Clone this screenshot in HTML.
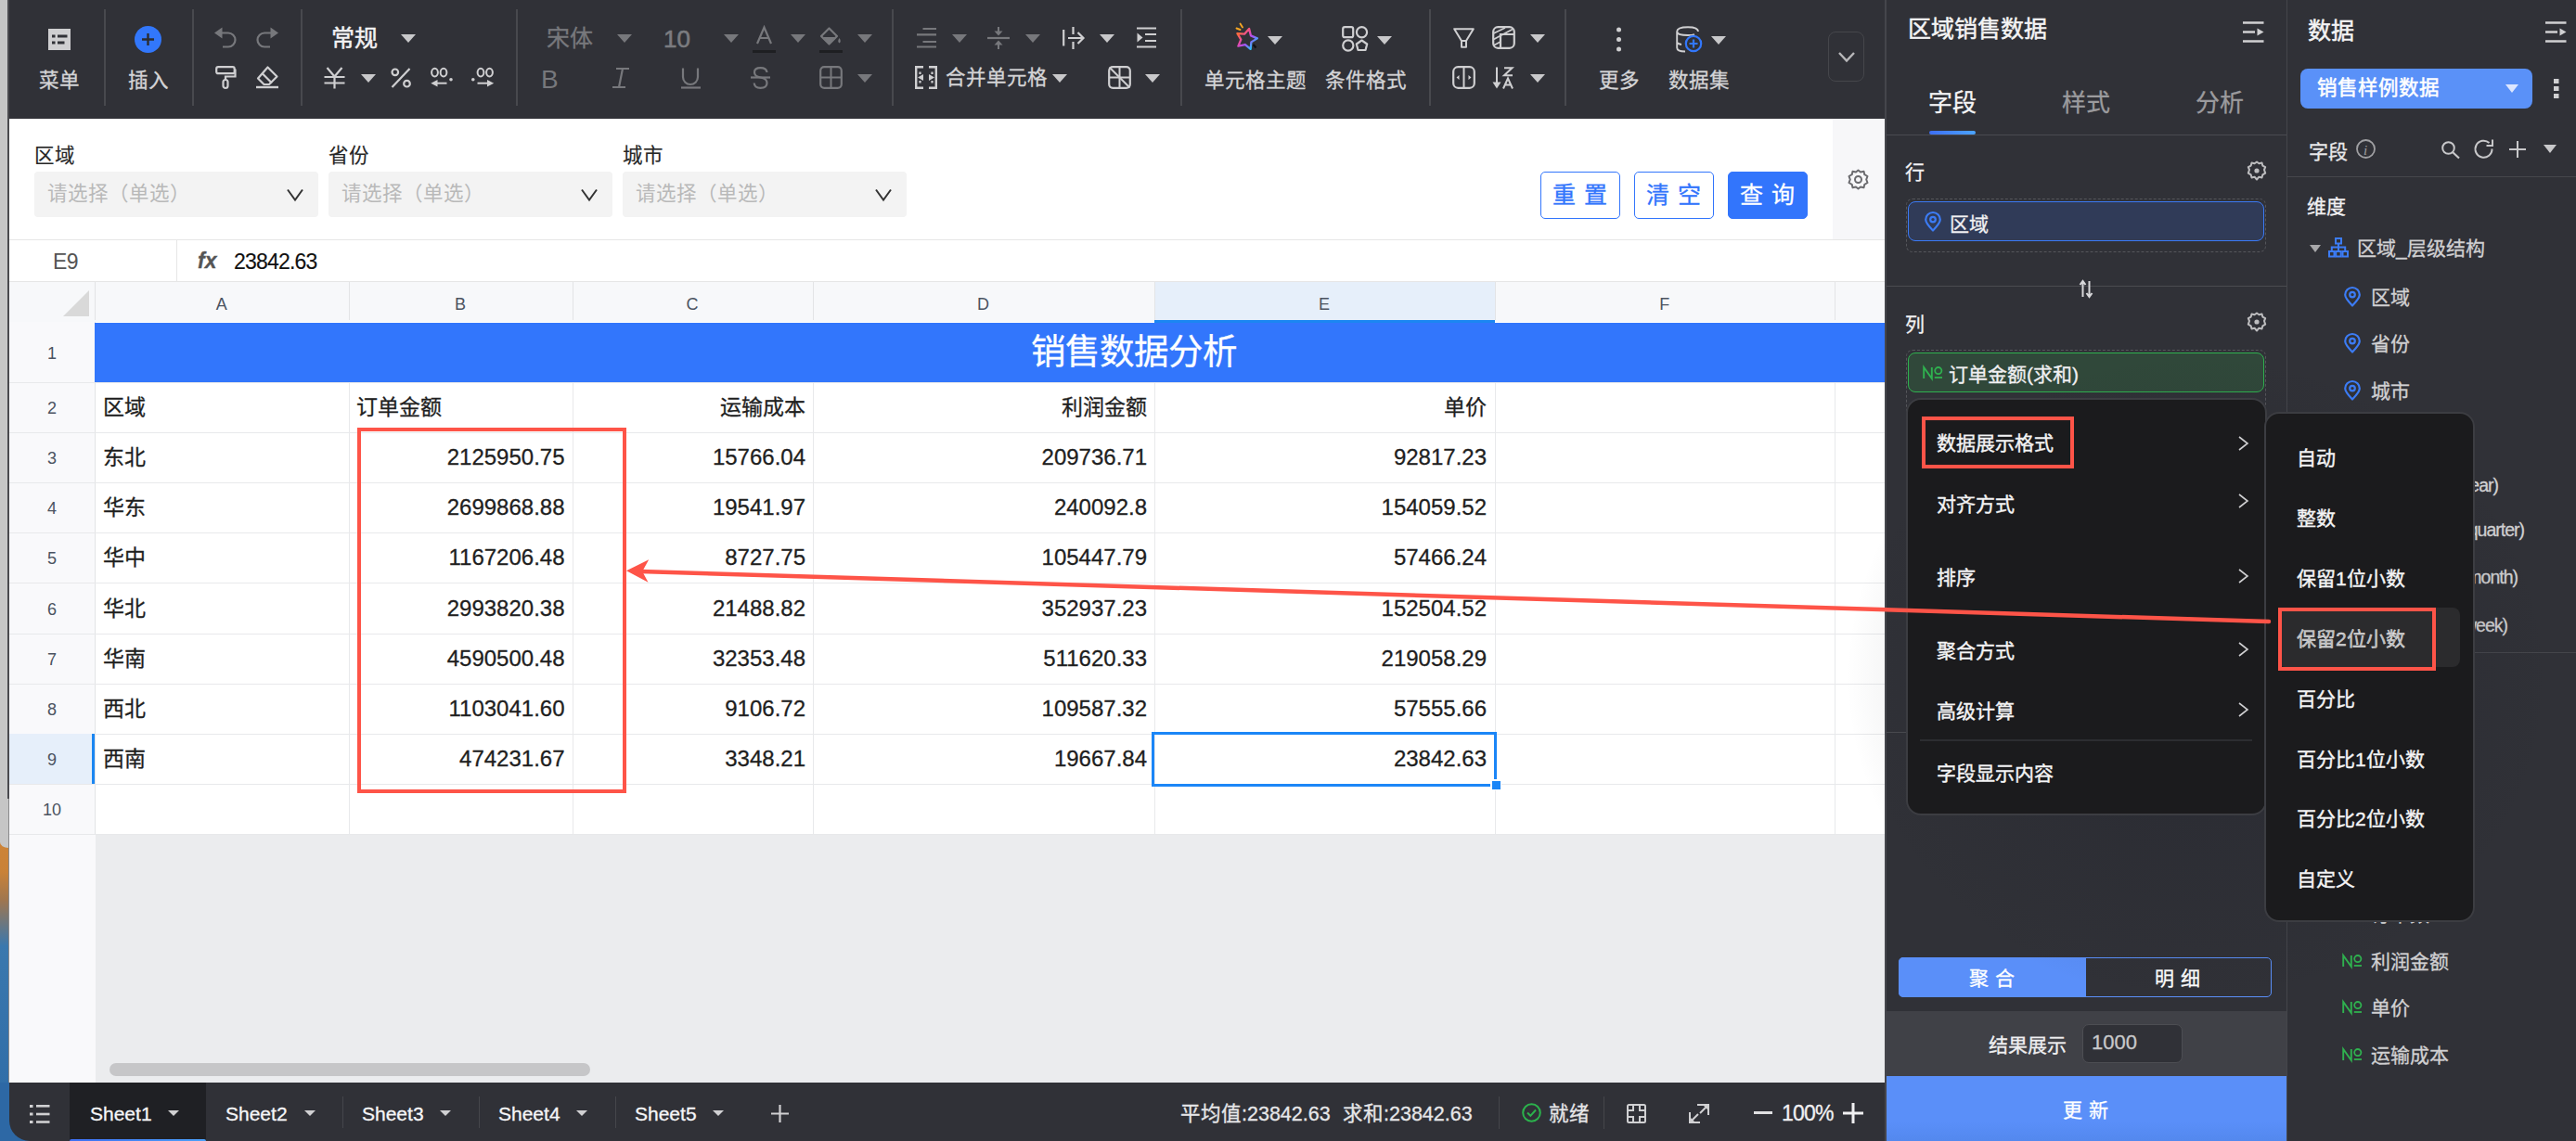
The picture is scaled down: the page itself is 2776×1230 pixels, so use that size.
<!DOCTYPE html>
<html lang="zh-CN">
<head>
<meta charset="utf-8">
<style>
*{box-sizing:border-box;margin:0;padding:0}
html,body{width:2776px;height:1230px;overflow:hidden;background:#c9c9c9}
body{font-family:"Liberation Sans",sans-serif;position:relative}
.a{position:absolute}
.t{position:absolute;white-space:nowrap;line-height:1;-webkit-text-stroke:0.3px currentColor}
svg{position:absolute;overflow:visible}
/* toolbar */
#tb{left:10px;top:0;width:2021px;height:128px;background:#303137}
.sep{position:absolute;top:10px;width:2px;height:104px;background:#48494e}
.lbl{font-size:21.5px;color:#d4d4d6}
.dis{color:#7b7c80}
.tri{position:absolute;width:0;height:0;border-left:8px solid transparent;border-right:8px solid transparent;border-top:9px solid #c8c8ca}
.tri.d{border-top-color:#77787c}
.ch{font-size:18px;color:#4b5361;-webkit-text-stroke:0}
.rn{font-size:18px;color:#4b5361;margin-top:2px;-webkit-text-stroke:0}
.cell{font-size:24px;color:#1f1f1f}
.cn{font-size:23px;margin-top:1px}
.flab{font-size:21.5px;color:#262626;margin-top:3px;-webkit-text-stroke:0.15px #262626}
.sel{width:306px;height:49px;background:#f3f3f3;border-radius:4px}
.ph{font-size:21.5px;color:#b9b9b9;margin-top:3px;-webkit-text-stroke:0}
.btno{width:86px;height:51px;border:1px solid #3275fc;border-radius:5px;color:#3275fc;font-size:25px;line-height:49px;text-align:center;background:#fff;letter-spacing:1px;-webkit-text-stroke:0.3px currentColor}
.stab{font-size:21px;color:#f6f6f8}
.tri2{width:0;height:0;border-left:6px solid transparent;border-right:6px solid transparent;border-top:6px solid #d0d0d2}
.sbar{font-size:21.5px;color:#e6e6e8}
.rp{font-size:21px;color:#d0d0d2;margin-top:1px}
.num{font-size:18px;color:#2fb14f;letter-spacing:-0.5px}
.mi{font-size:21px;color:#f4f4f5;margin-top:2px;-webkit-text-stroke:0.4px #f4f4f5}
</style>
</head>
<body>
<!-- wallpaper strip bottom-left -->
<div class="a" style="left:0;top:880px;width:12px;height:350px;background:linear-gradient(#d08536 0px,#c98238 60px,#a0764f 90px,#3a78ae 140px,#2d6aa6 350px)"></div>
<div class="a" style="left:0;top:0;width:10px;height:914px;background:#c6c6c6;border-bottom-left-radius:9px 6px"></div>
<div class="a" style="left:8px;top:0;width:2px;height:861px;background:#4a4a4e"></div>
<div class="a" style="left:9px;top:861px;width:1px;height:369px;background:#8a8a8c"></div>
<!-- FILTER AREA -->
<div class="a" style="left:10px;top:128px;width:2021px;height:131px;background:#fff"></div>
<div class="a" style="left:1975px;top:128px;width:56px;height:131px;background:#f7f7f9"></div>
<!-- formula bar -->
<div class="a" style="left:10px;top:258px;width:2021px;height:46px;background:#fff;border-top:1px solid #e6e6e6;border-bottom:1px solid #e6e6e6"></div>
<div class="a" style="left:190px;top:259px;width:1px;height:45px;background:#e6e6e6"></div>
<!-- col header -->
<div class="a" style="left:10px;top:304px;width:2021px;height:44px;background:#f7f8fa;border-bottom:1px solid #e3e4e6"></div>
<!-- grid -->
<div class="a" style="left:102px;top:347px;width:1929px;height:552px;background:#fff"></div>
<!-- row header col -->
<div class="a" style="left:10px;top:347px;width:93px;height:820px;background:#f9f9fb"></div>
<div class="a" style="left:102px;top:347px;width:1px;height:552px;background:#e3e4e6"></div>
<!-- empty gray -->
<div class="a" style="left:103px;top:899px;width:1928px;height:268px;background:#ebecee"></div>
<!-- bottom bar -->
<div class="a" style="left:0;top:1167px;width:40px;height:63px;background:#2d68a5"></div>
<div class="a" style="left:10px;top:1167px;width:2021px;height:63px;background:#303137;border-bottom-left-radius:22px"></div>
<!-- MIDDLE PANEL -->
<div class="a" style="left:2031px;top:0;width:433px;height:1230px;background:#303137"></div>
<!-- RIGHT PANEL -->
<div class="a" style="left:2464px;top:0;width:312px;height:1230px;background:#303137;border-left:1px solid #45464b"></div>


<!-- FILTER CONTENT -->
<div class="t flab" style="left:37px;top:155px">区域</div>
<div class="t flab" style="left:354px;top:155px">省份</div>
<div class="t flab" style="left:671px;top:155px">城市</div>
<div class="a sel" style="left:37px;top:185px"></div>
<div class="a sel" style="left:354px;top:185px"></div>
<div class="a sel" style="left:671px;top:185px"></div>
<div class="t ph" style="left:51px;top:196px">请选择（单选）</div>
<div class="t ph" style="left:368px;top:196px">请选择（单选）</div>
<div class="t ph" style="left:685px;top:196px">请选择（单选）</div>
<svg style="left:309px;top:203px" width="18" height="14"><path d="M1 1.5 L9 12.5 L17 1.5" fill="none" stroke="#333" stroke-width="2"/></svg>
<svg style="left:626px;top:203px" width="18" height="14"><path d="M1 1.5 L9 12.5 L17 1.5" fill="none" stroke="#333" stroke-width="2"/></svg>
<svg style="left:943px;top:203px" width="18" height="14"><path d="M1 1.5 L9 12.5 L17 1.5" fill="none" stroke="#333" stroke-width="2"/></svg>
<div class="a btno" style="left:1660px;top:185px">重 置</div>
<div class="a btno" style="left:1761px;top:185px">清 空</div>
<div class="a btno" style="left:1862px;top:185px;background:#3275fc;color:#fff;border-color:#3275fc">查 询</div>
<svg style="left:1991px;top:182px" width="23" height="23"><g fill="none" stroke="#6b6b6f" stroke-width="2"><path d="M11.5 1.5 L14 3.5 L17.5 2.8 L18.3 6.2 L21.5 8 L20.2 11.5 L21.5 15 L18.3 16.8 L17.5 20.2 L14 19.5 L11.5 21.5 L9 19.5 L5.5 20.2 L4.7 16.8 L1.5 15 L2.8 11.5 L1.5 8 L4.7 6.2 L5.5 2.8 L9 3.5 Z" stroke-linejoin="round"/><circle cx="11.5" cy="11.5" r="3.5"/></g></svg>
<!-- formula bar -->
<div class="t" style="left:57px;top:271px;font-size:23px;color:#555;letter-spacing:-0.5px;-webkit-text-stroke:0">E9</div>
<div class="t" style="left:213px;top:270px;font-size:23px;font-style:italic;font-weight:bold;color:#555">fx</div>
<div class="t" style="left:252px;top:271px;font-size:23px;color:#111;letter-spacing:-0.8px;-webkit-text-stroke:0.15px #111">23842.63</div>

<!-- GRID -->
<div class="a" style="left:1244px;top:304px;width:367px;height:44px;background:#e6effa"></div>
<div class="a" style="left:1244px;top:345px;width:367px;height:3px;background:#1b86f2"></div>
<div class="a" style="left:102px;top:304px;width:1px;height:41px;background:#e3e4e6"></div>
<div class="a" style="left:375.5px;top:304px;width:1px;height:41px;background:#e3e4e6"></div>
<div class="a" style="left:616.5px;top:304px;width:1px;height:41px;background:#e3e4e6"></div>
<div class="a" style="left:875.5px;top:304px;width:1px;height:41px;background:#e3e4e6"></div>
<div class="a" style="left:1243.5px;top:304px;width:1px;height:41px;background:#e3e4e6"></div>
<div class="a" style="left:1610.5px;top:304px;width:1px;height:41px;background:#e3e4e6"></div>
<div class="a" style="left:1977px;top:304px;width:1px;height:41px;background:#e3e4e6"></div>
<div class="t ch" style="left:218.75px;top:319px;width:40px;text-align:center">A</div>
<div class="t ch" style="left:476.0px;top:319px;width:40px;text-align:center">B</div>
<div class="t ch" style="left:726.0px;top:319px;width:40px;text-align:center">C</div>
<div class="t ch" style="left:1039.5px;top:319px;width:40px;text-align:center">D</div>
<div class="t ch" style="left:1407.0px;top:319px;width:40px;text-align:center">E</div>
<div class="t ch" style="left:1773.75px;top:319px;width:40px;text-align:center">F</div>
<svg style="left:68px;top:313px" width="28" height="28"><path d="M28 0 L28 28 L0 28 Z" fill="#d9d9d9"/></svg>
<div class="a" style="left:10px;top:412px;width:2021px;height:1px;background:#e8e9eb"></div>
<div class="a" style="left:10px;top:466px;width:2021px;height:1px;background:#e8e9eb"></div>
<div class="a" style="left:10px;top:520px;width:2021px;height:1px;background:#e8e9eb"></div>
<div class="a" style="left:10px;top:574px;width:2021px;height:1px;background:#e8e9eb"></div>
<div class="a" style="left:10px;top:628px;width:2021px;height:1px;background:#e8e9eb"></div>
<div class="a" style="left:10px;top:683px;width:2021px;height:1px;background:#e8e9eb"></div>
<div class="a" style="left:10px;top:737px;width:2021px;height:1px;background:#e8e9eb"></div>
<div class="a" style="left:10px;top:791px;width:2021px;height:1px;background:#e8e9eb"></div>
<div class="a" style="left:10px;top:845px;width:2021px;height:1px;background:#e8e9eb"></div>
<div class="a" style="left:10px;top:899px;width:2021px;height:1px;background:#e8e9eb"></div>
<div class="a" style="left:375.5px;top:412px;width:1px;height:487px;background:#e8e9eb"></div>
<div class="a" style="left:616.5px;top:412px;width:1px;height:487px;background:#e8e9eb"></div>
<div class="a" style="left:875.5px;top:412px;width:1px;height:487px;background:#e8e9eb"></div>
<div class="a" style="left:1243.5px;top:412px;width:1px;height:487px;background:#e8e9eb"></div>
<div class="a" style="left:1610.5px;top:412px;width:1px;height:487px;background:#e8e9eb"></div>
<div class="a" style="left:1977px;top:412px;width:1px;height:487px;background:#e8e9eb"></div>
<div class="a" style="left:102px;top:348px;width:1929px;height:64px;background:#3276fc"></div>
<div class="t" style="left:1111px;top:361px;font-size:37.5px;font-weight:500;color:#fff">销售数据分析</div>
<div class="a" style="left:10px;top:791px;width:92px;height:54px;background:#e6effa"></div>
<div class="a" style="left:99px;top:791px;width:3px;height:54px;background:#1b86f2"></div>
<div class="t rn" style="left:16px;top:370.0px;width:80px;text-align:center">1</div>
<div class="t rn" style="left:16px;top:429.0px;width:80px;text-align:center">2</div>
<div class="t rn" style="left:16px;top:483.0px;width:80px;text-align:center">3</div>
<div class="t rn" style="left:16px;top:537.0px;width:80px;text-align:center">4</div>
<div class="t rn" style="left:16px;top:591.0px;width:80px;text-align:center">5</div>
<div class="t rn" style="left:16px;top:645.5px;width:80px;text-align:center">6</div>
<div class="t rn" style="left:16px;top:700.0px;width:80px;text-align:center">7</div>
<div class="t rn" style="left:16px;top:754.0px;width:80px;text-align:center">8</div>
<div class="t rn" style="left:16px;top:808.0px;width:80px;text-align:center">9</div>
<div class="t rn" style="left:16px;top:862.0px;width:80px;text-align:center">10</div>
<div class="t cell cn" style="left:111px;top:427.0px">区域</div>
<div class="t cell cn" style="left:384px;top:427.0px">订单金额</div>
<div class="t cell cn" style="right:1908.0px;top:427.0px">运输成本</div>
<div class="t cell cn" style="right:1540.0px;top:427.0px">利润金额</div>
<div class="t cell cn" style="right:1174.0px;top:427.0px">单价</div>
<div class="t cell cn" style="left:111px;top:481.0px">东北</div>
<div class="t cell" style="right:2167.5px;top:481.0px">2125950.75</div>
<div class="t cell" style="right:1908.0px;top:481.0px">15766.04</div>
<div class="t cell" style="right:1540.0px;top:481.0px">209736.71</div>
<div class="t cell" style="right:1174.0px;top:481.0px">92817.23</div>
<div class="t cell cn" style="left:111px;top:535.0px">华东</div>
<div class="t cell" style="right:2167.5px;top:535.0px">2699868.88</div>
<div class="t cell" style="right:1908.0px;top:535.0px">19541.97</div>
<div class="t cell" style="right:1540.0px;top:535.0px">240092.8</div>
<div class="t cell" style="right:1174.0px;top:535.0px">154059.52</div>
<div class="t cell cn" style="left:111px;top:589.0px">华中</div>
<div class="t cell" style="right:2167.5px;top:589.0px">1167206.48</div>
<div class="t cell" style="right:1908.0px;top:589.0px">8727.75</div>
<div class="t cell" style="right:1540.0px;top:589.0px">105447.79</div>
<div class="t cell" style="right:1174.0px;top:589.0px">57466.24</div>
<div class="t cell cn" style="left:111px;top:643.5px">华北</div>
<div class="t cell" style="right:2167.5px;top:643.5px">2993820.38</div>
<div class="t cell" style="right:1908.0px;top:643.5px">21488.82</div>
<div class="t cell" style="right:1540.0px;top:643.5px">352937.23</div>
<div class="t cell" style="right:1174.0px;top:643.5px">152504.52</div>
<div class="t cell cn" style="left:111px;top:698.0px">华南</div>
<div class="t cell" style="right:2167.5px;top:698.0px">4590500.48</div>
<div class="t cell" style="right:1908.0px;top:698.0px">32353.48</div>
<div class="t cell" style="right:1540.0px;top:698.0px">511620.33</div>
<div class="t cell" style="right:1174.0px;top:698.0px">219058.29</div>
<div class="t cell cn" style="left:111px;top:752.0px">西北</div>
<div class="t cell" style="right:2167.5px;top:752.0px">1103041.60</div>
<div class="t cell" style="right:1908.0px;top:752.0px">9106.72</div>
<div class="t cell" style="right:1540.0px;top:752.0px">109587.32</div>
<div class="t cell" style="right:1174.0px;top:752.0px">57555.66</div>
<div class="t cell cn" style="left:111px;top:806.0px">西南</div>
<div class="t cell" style="right:2167.5px;top:806.0px">474231.67</div>
<div class="t cell" style="right:1908.0px;top:806.0px">3348.21</div>
<div class="t cell" style="right:1540.0px;top:806.0px">19667.84</div>
<div class="t cell" style="right:1174.0px;top:806.0px">23842.63</div>
<!-- BOTTOM BAR CONTENT -->
<div class="a" style="left:118px;top:1146px;width:518px;height:14px;background:#c6c6c8;border-radius:7px"></div>
<div class="a" style="left:75px;top:1167px;width:147px;height:63px;background:#1f2024"></div>
<div class="a" style="left:75px;top:1227.5px;width:147px;height:2.5px;background:linear-gradient(90deg,#3d6ef2,#4aa0f8);border-radius:2px 2px 0 0"></div>
<svg style="left:32px;top:1190px" width="22" height="22"><g fill="#d0d0d2"><rect x="0" y="1" width="3.5" height="3"/><rect x="0" y="9.5" width="3.5" height="3"/><rect x="0" y="18" width="3.5" height="3"/><rect x="7" y="1" width="14.5" height="2.6"/><rect x="7" y="9.7" width="14.5" height="2.6"/><rect x="7" y="18.2" width="14.5" height="2.6"/></g></svg>
<div class="t stab" style="left:97px;top:1190px">Sheet1</div>
<div class="a tri2" style="left:181px;top:1197px"></div>
<div class="t stab" style="left:243px;top:1190px">Sheet2</div>
<div class="a tri2" style="left:328px;top:1197px"></div>
<div class="a" style="left:369px;top:1182px;width:1px;height:34px;background:#45464b"></div>
<div class="t stab" style="left:390px;top:1190px">Sheet3</div>
<div class="a tri2" style="left:474px;top:1197px"></div>
<div class="a" style="left:516px;top:1182px;width:1px;height:34px;background:#45464b"></div>
<div class="t stab" style="left:537px;top:1190px">Sheet4</div>
<div class="a tri2" style="left:621px;top:1197px"></div>
<div class="a" style="left:663px;top:1182px;width:1px;height:34px;background:#45464b"></div>
<div class="t stab" style="left:684px;top:1190px">Sheet5</div>
<div class="a tri2" style="left:768px;top:1197px"></div>
<svg style="left:831px;top:1191px" width="19" height="19"><path d="M9.5 0 V19 M0 9.5 H19" stroke="#d0d0d2" stroke-width="2.2"/></svg>
<div class="t sbar" style="left:1272px;top:1191px">平均值:23842.63</div>
<div class="t sbar" style="left:1447px;top:1191px">求和:23842.63</div>
<div class="a" style="left:1615px;top:1182px;width:1px;height:35px;background:#45464b"></div>
<svg style="left:1640px;top:1189px" width="21" height="21"><circle cx="10.5" cy="10.5" r="9.3" fill="none" stroke="#2bb24c" stroke-width="2"/><path d="M6 10.5 L9.3 13.8 L15 7.5" fill="none" stroke="#2bb24c" stroke-width="2"/></svg>
<div class="t sbar" style="left:1669px;top:1191px">就绪</div>
<div class="a" style="left:1728px;top:1182px;width:1px;height:35px;background:#45464b"></div>
<svg style="left:1753px;top:1190px" width="21" height="21"><g fill="none" stroke="#d0d0d2" stroke-width="2"><rect x="1" y="1" width="19" height="19" rx="1.5"/><path d="M7 1 V7 H1 M14 1 V7 H20 M7 20 V14 H1 M14 20 V14 H20"/></g></svg>
<svg style="left:1820px;top:1190px" width="22" height="21"><g fill="none" stroke="#d0d0d2" stroke-width="2"><path d="M9 1 H21 V12 M1 9 V20 H12 M21 1 L12 10 M1 20 L10 11"/></g><path d="M15 1 H21 V7 Z M1 14 V20 H7 Z" fill="#d0d0d2"/></svg>
<div class="a" style="left:1890px;top:1198px;width:20px;height:3px;background:#e0e0e2"></div>
<div class="t sbar" style="left:1920px;top:1189px;color:#f0f0f2;font-size:23px;letter-spacing:-0.8px">100%</div>
<svg style="left:1986px;top:1189px" width="22" height="22"><path d="M11 0 V22 M0 11 H22" stroke="#f0f0f2" stroke-width="3"/></svg>


<!-- MIDDLE PANEL CONTENT -->
<div class="t" style="left:2056px;top:19px;font-size:25px;-webkit-text-stroke:0.5px #f4f4f5;color:#f4f4f5">区域销售数据</div>
<svg style="left:2417px;top:23px" width="23" height="23"><path d="M0 1.5 H22.5 M0 11.5 H13 M0 21.5 H22.5" stroke="#d0d0d2" stroke-width="2.4"/><path d="M15.5 7.5 L22.5 11.5 L15.5 15.5 Z" fill="#d0d0d2"/></svg>
<div class="t" style="left:2078px;top:98px;font-size:26px;color:#f4f4f5">字段</div>
<div class="t" style="left:2222px;top:98px;font-size:26px;color:#9b9b9e">样式</div>
<div class="t" style="left:2366px;top:98px;font-size:26px;color:#9b9b9e">分析</div>
<div class="a" style="left:2079px;top:141px;width:50px;height:4px;border-radius:2px;background:linear-gradient(90deg,#3d6ef2,#4ba4ff)"></div>
<div class="a" style="left:2031px;top:145px;width:433px;height:1px;background:#4a4b50"></div>
<div class="t" style="left:2053px;top:175px;font-size:21px;color:#f0f0f2">行</div>
<svg class="gear" style="left:2421px;top:173px" width="22" height="22"><g fill="none" stroke="#bdbdbf" stroke-width="2"><path d="M11 1.5 L13.4 3.3 L16.5 2.6 L17.3 5.6 L20.2 7.2 L19 10 L20.2 13.6 L17.3 15.4 L16.5 18.4 L13.4 17.7 L11 20.5 L8.6 17.7 L5.5 18.4 L4.7 15.4 L1.8 13.6 L3 10 L1.8 7.2 L4.7 5.6 L5.5 2.6 L8.6 3.3 Z" stroke-linejoin="round"/><circle cx="11" cy="11" r="1.6" fill="#bdbdbf"/></g></svg>
<div class="a" style="left:2054px;top:214px;width:388px;height:58px;border:1px dashed #55565b;border-radius:7px"></div>
<div class="a" style="left:2056px;top:217px;width:384px;height:43px;border:1.5px solid #3b7af5;border-radius:8px;background:#303b58"></div>
<svg style="left:2074px;top:228px" width="18" height="22"><path d="M9 20.5 Q1.2 12.5 1.2 8.8 A7.8 7.8 0 0 1 16.8 8.8 Q16.8 12.5 9 20.5 Z" fill="none" stroke="#3c7cf5" stroke-width="2.2" stroke-linejoin="round"/><circle cx="9" cy="8.6" r="2.8" fill="none" stroke="#3c7cf5" stroke-width="2.2"/></svg>
<div class="t" style="left:2101px;top:231px;font-size:21px;color:#f0f0f2">区域</div>
<div class="a" style="left:2031px;top:308px;width:433px;height:1px;background:#4a4b50"></div>
<svg style="left:2241px;top:302px" width="14" height="19"><path d="M3.5 18 V1.5 M0.5 5 L3.5 1 L6.5 5 M10.5 1 V17.5 M7.5 14 L10.5 18 L13.5 14" fill="none" stroke="#d8d8da" stroke-width="2"/></svg>
<div class="t" style="left:2053px;top:339px;font-size:21px;color:#f0f0f2">列</div>
<svg class="gear" style="left:2421px;top:336px" width="22" height="22"><g fill="none" stroke="#bdbdbf" stroke-width="2"><path d="M11 1.5 L13.4 3.3 L16.5 2.6 L17.3 5.6 L20.2 7.2 L19 10 L20.2 13.6 L17.3 15.4 L16.5 18.4 L13.4 17.7 L11 20.5 L8.6 17.7 L5.5 18.4 L4.7 15.4 L1.8 13.6 L3 10 L1.8 7.2 L4.7 5.6 L5.5 2.6 L8.6 3.3 Z" stroke-linejoin="round"/><circle cx="11" cy="11" r="1.6" fill="#bdbdbf"/></g></svg>
<div class="a" style="left:2054px;top:377px;width:388px;height:368px;border:1px dashed #55565b;border-radius:7px"></div>
<div class="a" style="left:2031px;top:789px;width:433px;height:1px;background:#4a4b50"></div>
<div class="a" style="left:2056px;top:380px;width:384px;height:43px;border:1.5px solid #2fb14f;border-radius:8px;background:#30483a"></div>
<svg style="left:2072px;top:395px" width="22" height="14"><path d="M1.2 13 V1 L9.8 13 V1" fill="none" stroke="#2fb14f" stroke-width="1.9"/><ellipse cx="16.8" cy="4.6" rx="3.6" ry="3.6" fill="none" stroke="#2fb14f" stroke-width="1.8"/><path d="M12.8 12 H21" stroke="#2fb14f" stroke-width="1.8"/></svg>
<div class="t" style="left:2100px;top:393px;font-size:21px;color:#f0f0f2">订单金额(求和)</div>
<!-- segmented -->
<div class="a" style="left:2046px;top:1032px;width:402px;height:43px;border:1.5px solid #5a8ff9;border-radius:5px;background:#303137"></div>
<div class="a" style="left:2046px;top:1032px;width:202px;height:43px;border-radius:5px 0 0 5px;background:#5a8ff9"></div>
<div class="t" style="left:2122px;top:1044px;font-size:21px;color:#fff;letter-spacing:7px">聚合</div>
<div class="t" style="left:2322px;top:1044px;font-size:21px;color:#fff;letter-spacing:7px">明细</div>
<div class="a" style="left:2031px;top:1090px;width:433px;height:70px;background:#404147"></div>
<div class="t" style="left:2143px;top:1116px;font-size:21px;color:#f0f0f2">结果展示</div>
<div class="a" style="left:2244px;top:1104px;width:108px;height:42px;background:#303137;border:1px solid #4d4e53;border-radius:7px"></div>
<div class="t" style="left:2254px;top:1113px;font-size:22px;color:#c8c8ca">1000</div>
<div class="a" style="left:2031px;top:1160px;width:433px;height:70px;background:linear-gradient(#5a8ff9,#5a8ff9 70%,#5388ee)"></div>
<div class="t" style="left:2223px;top:1186px;font-size:21px;color:#fff;letter-spacing:7px">更新</div>

<div class="a" style="left:2031px;top:0;width:1.5px;height:1230px;background:#45464c"></div>
<!-- RIGHT PANEL CONTENT -->
<div class="t" style="left:2487px;top:21px;font-size:25px;-webkit-text-stroke:0.5px #f4f4f5;color:#f4f4f5">数据</div>
<svg style="left:2743px;top:23px" width="23" height="23"><path d="M0 1.5 H22.5 M0 11.5 H13 M0 21.5 H22.5" stroke="#d0d0d2" stroke-width="2.4"/><path d="M15.5 7.5 L22.5 11.5 L15.5 15.5 Z" fill="#d0d0d2"/></svg>
<div class="a" style="left:2479px;top:74px;width:250px;height:43px;border-radius:8px;background:#5a91f8"></div>
<div class="t" style="left:2497px;top:85px;font-size:21.5px;-webkit-text-stroke:0.5px #fff;color:#fff">销售样例数据</div>
<div class="a" style="left:2700px;top:91px;width:0;height:0;border-left:7.5px solid transparent;border-right:7.5px solid transparent;border-top:9px solid #dce6ff"></div>
<svg style="left:2752px;top:85px" width="6" height="22"><rect x="0" y="0" width="5.5" height="5" fill="#d0d0d2"/><rect x="0" y="8" width="5.5" height="5" fill="#d0d0d2"/><rect x="0" y="16" width="5.5" height="5" fill="#d0d0d2"/></svg>
<div class="t" style="left:2488px;top:153px;font-size:21px;color:#e8e8ea">字段</div>
<svg style="left:2539px;top:150px" width="22" height="22"><circle cx="10.5" cy="10.5" r="9.5" fill="none" stroke="#a0a0a3" stroke-width="1.8"/><text x="8" y="16.5" font-family="Liberation Serif" font-style="italic" font-size="15" fill="#a0a0a3">i</text></svg>
<svg style="left:2631px;top:152px" width="20" height="19"><circle cx="7.5" cy="7.5" r="6.3" fill="none" stroke="#c8c8ca" stroke-width="2"/><path d="M12 12 L19 18.5" stroke="#c8c8ca" stroke-width="2.2"/></svg>
<svg style="left:2666px;top:150px" width="22" height="21"><path d="M19.5 10.5 A9 9 0 1 1 16.5 4" fill="none" stroke="#c8c8ca" stroke-width="2"/><path d="M20 0.5 V7 H13.5" fill="none" stroke="#c8c8ca" stroke-width="2"/></svg>
<svg style="left:2704px;top:152px" width="18" height="18"><path d="M9 0 V18 M0 9 H18" stroke="#c8c8ca" stroke-width="2"/></svg>
<div class="a" style="left:2741px;top:156px;width:0;height:0;border-left:7.5px solid transparent;border-right:7.5px solid transparent;border-top:9px solid #c8c8ca"></div>
<div class="a" style="left:2465px;top:190px;width:311px;height:1px;background:#45464b"></div>
<div class="t" style="left:2486px;top:212px;font-size:21px;color:#f0f0f2">维度</div>
<div class="a" style="left:2489px;top:264px;width:0;height:0;border-left:6.5px solid transparent;border-right:6.5px solid transparent;border-top:8px solid #a8a8aa"></div>
<svg style="left:2509px;top:256px" width="22" height="22"><g fill="none" stroke="#3c7cf5" stroke-width="2"><rect x="8" y="1" width="6" height="5.5"/><rect x="1" y="15" width="5.5" height="5.5"/><rect x="8.2" y="15" width="5.5" height="5.5"/><rect x="15.5" y="15" width="5.5" height="5.5"/><path d="M11 6.5 V15 M3.8 15 V10.5 H18.2 V15"/></g></svg>
<div class="t rp" style="left:2540px;top:256px">区域_层级结构</div>
<svg style="left:2526px;top:309px" width="18" height="22"><path d="M9 20.5 Q1.2 12.5 1.2 8.8 A7.8 7.8 0 0 1 16.8 8.8 Q16.8 12.5 9 20.5 Z" fill="none" stroke="#3c7cf5" stroke-width="2.2" stroke-linejoin="round"/><circle cx="9" cy="8.6" r="2.8" fill="none" stroke="#3c7cf5" stroke-width="2.2"/></svg>
<div class="t rp" style="left:2555px;top:309px">区域</div>
<svg style="left:2526px;top:359px" width="18" height="22"><path d="M9 20.5 Q1.2 12.5 1.2 8.8 A7.8 7.8 0 0 1 16.8 8.8 Q16.8 12.5 9 20.5 Z" fill="none" stroke="#3c7cf5" stroke-width="2.2" stroke-linejoin="round"/><circle cx="9" cy="8.6" r="2.8" fill="none" stroke="#3c7cf5" stroke-width="2.2"/></svg>
<div class="t rp" style="left:2555px;top:359px">省份</div>
<svg style="left:2526px;top:410px" width="18" height="22"><path d="M9 20.5 Q1.2 12.5 1.2 8.8 A7.8 7.8 0 0 1 16.8 8.8 Q16.8 12.5 9 20.5 Z" fill="none" stroke="#3c7cf5" stroke-width="2.2" stroke-linejoin="round"/><circle cx="9" cy="8.6" r="2.8" fill="none" stroke="#3c7cf5" stroke-width="2.2"/></svg>
<div class="t rp" style="left:2555px;top:410px">城市</div>
<div class="t rp" style="left:2555px;top:460px">订单日期</div>
<div class="t rp" style="right:84px;top:513px;font-size:19.5px;letter-spacing:-1px">订单日期(year)</div>
<div class="t rp" style="right:56px;top:561px;font-size:19.5px;letter-spacing:-1px">订单日期(quarter)</div>
<div class="t rp" style="right:63px;top:612px;font-size:19.5px;letter-spacing:-1px">订单日期(month)</div>
<div class="t rp" style="right:74px;top:664px;font-size:19.5px;letter-spacing:-1px">订单日期(week)</div>
<div class="a" style="left:2465px;top:703px;width:311px;height:1px;background:#45464b"></div>
<svg style="left:2524.0px;top:977.0px" width="22" height="14"><path d="M1.2 13 V1 L9.8 13 V1" fill="none" stroke="#2fb14f" stroke-width="1.9"/><ellipse cx="16.8" cy="4.6" rx="3.6" ry="3.6" fill="none" stroke="#2fb14f" stroke-width="1.8"/><path d="M12.8 12 H21" stroke="#2fb14f" stroke-width="1.8"/></svg>
<div class="t rp" style="left:2555px;top:974px">订单数</div>
<svg style="left:2524px;top:1029px" width="22" height="14"><path d="M1.2 13 V1 L9.8 13 V1" fill="none" stroke="#2fb14f" stroke-width="1.9"/><ellipse cx="16.8" cy="4.6" rx="3.6" ry="3.6" fill="none" stroke="#2fb14f" stroke-width="1.8"/><path d="M12.8 12 H21" stroke="#2fb14f" stroke-width="1.8"/></svg>
<div class="t rp" style="left:2555px;top:1025px">利润金额</div>
<svg style="left:2524px;top:1079px" width="22" height="14"><path d="M1.2 13 V1 L9.8 13 V1" fill="none" stroke="#2fb14f" stroke-width="1.9"/><ellipse cx="16.8" cy="4.6" rx="3.6" ry="3.6" fill="none" stroke="#2fb14f" stroke-width="1.8"/><path d="M12.8 12 H21" stroke="#2fb14f" stroke-width="1.8"/></svg>
<div class="t rp" style="left:2555px;top:1075px">单价</div>
<svg style="left:2524px;top:1130px" width="22" height="14"><path d="M1.2 13 V1 L9.8 13 V1" fill="none" stroke="#2fb14f" stroke-width="1.9"/><ellipse cx="16.8" cy="4.6" rx="3.6" ry="3.6" fill="none" stroke="#2fb14f" stroke-width="1.8"/><path d="M12.8 12 H21" stroke="#2fb14f" stroke-width="1.8"/></svg>
<div class="t rp" style="left:2555px;top:1126px">运输成本</div>

<!-- OVERLAYS -->
<div class="a" style="left:1241px;top:789px;width:372px;height:59px;border:3.5px solid #1b86f7"></div>
<div class="a" style="left:1606px;top:840px;width:12px;height:12px;background:#fff"></div>
<div class="a" style="left:1608px;top:842px;width:9px;height:9px;background:#1b86f7"></div>
<div class="a" style="left:385px;top:461px;width:290px;height:394px;border:4px solid #fe5448"></div>


<!-- TOOLBAR -->
<div class="a" style="left:10px;top:0;width:2021px;height:128px;background:#303137"></div>

<div class="sep" style="left:112px"></div>
<div class="sep" style="left:207px"></div>
<div class="sep" style="left:324px"></div>
<div class="sep" style="left:556px"></div>
<div class="sep" style="left:961px"></div>
<div class="sep" style="left:1272px"></div>
<div class="sep" style="left:1540px"></div>
<div class="sep" style="left:1686px"></div>
<!-- menu -->
<svg style="left:52px;top:31px" width="24" height="23"><rect x="0" y="0" width="24" height="23" fill="#cfcfd1"/><rect x="4" y="6.5" width="3.5" height="3" fill="#303137"/><rect x="10" y="6.5" width="10.5" height="3" fill="#303137"/><rect x="4" y="13.5" width="3.5" height="3" fill="#303137"/><rect x="10" y="13.5" width="7.5" height="3" fill="#303137"/></svg>
<div class="t lbl" style="left:42px;top:77px">菜单</div>
<!-- insert -->
<svg style="left:145px;top:28px" width="29" height="29"><circle cx="14.5" cy="14.5" r="14.5" fill="#3277fb"/><path d="M8 14.5H21M14.5 8V21" stroke="#2b2c30" stroke-width="2.4"/></svg>
<div class="t lbl" style="left:138px;top:77px">插入</div>
<!-- undo/redo -->
<svg style="left:231px;top:29px" width="26" height="23"><path d="M0 6.5 L8.5 0.5 L8.5 12.5 Z" fill="#77787c"/><path d="M7 6.5 H15 A7.5 7.5 0 0 1 15 21.5 H9" fill="none" stroke="#77787c" stroke-width="2.2"/></svg>
<svg style="left:274px;top:29px" width="26" height="23"><path d="M26 6.5 L17.5 0.5 L17.5 12.5 Z" fill="#77787c"/><path d="M19 6.5 H11 A7.5 7.5 0 0 0 11 21.5 H17" fill="none" stroke="#77787c" stroke-width="2.2"/></svg>
<!-- format painter -->
<svg style="left:232px;top:71px" width="23" height="25"><rect x="1.2" y="1.2" width="19.5" height="7" rx="2" fill="none" stroke="#cfcfd1" stroke-width="2.2"/><path d="M20.7 4.5 H21.5 V11.5 H11 V15" fill="none" stroke="#cfcfd1" stroke-width="2.2"/><rect x="8.5" y="15" width="5" height="9" rx="2.5" fill="none" stroke="#cfcfd1" stroke-width="2.2"/></svg>
<!-- eraser -->
<svg style="left:275px;top:71px" width="26" height="25"><path d="M13.5 1.5 L23.5 11.5 L15 20 L9.5 20 L3 13.5 Z" fill="none" stroke="#cfcfd1" stroke-width="2.2" stroke-linejoin="round"/><path d="M8 8.5 L18 18.5" stroke="#cfcfd1" stroke-width="2.2"/><path d="M1 23 H25" stroke="#cfcfd1" stroke-width="2.4"/></svg>
<!-- 常规 -->
<div class="t" style="left:357px;top:29px;font-size:25px;-webkit-text-stroke:0.5px #f2f2f3;color:#f2f2f3">常规</div>
<div class="tri" style="left:432px;top:37px"></div>
<svg style="left:349px;top:72px" width="23" height="24"><path d="M3.5 1 L11.5 10.5 L19.5 1 M0.5 11 H22.5 M0.5 17.5 H22.5 M11.5 10.5 V23.5" fill="none" stroke="#cfcfd1" stroke-width="2.2"/></svg>
<div class="tri" style="left:389px;top:80px"></div>
<svg style="left:421px;top:73px" width="23" height="22"><circle cx="4.8" cy="4.8" r="3.3" fill="none" stroke="#cfcfd1" stroke-width="2.2"/><circle cx="17.5" cy="17.2" r="3.3" fill="none" stroke="#cfcfd1" stroke-width="2.2"/><path d="M20.5 1 L1.5 21" stroke="#cfcfd1" stroke-width="2.2"/></svg>
<svg style="left:464px;top:72px" width="26" height="23"><g fill="none" stroke="#cfcfd1" stroke-width="2"><ellipse cx="4.5" cy="6.1" rx="3.4" ry="4.4"/><ellipse cx="14" cy="6.1" rx="3.4" ry="4.4"/><path d="M5 17.7 H17.5"/></g><circle cx="22" cy="13.8" r="1.8" fill="#cfcfd1"/><path d="M0.3 17.7 L7.5 14 V21.5 Z" fill="#cfcfd1"/></svg>
<svg style="left:507px;top:72px" width="26" height="23"><g fill="none" stroke="#cfcfd1" stroke-width="2"><ellipse cx="11" cy="6.1" rx="3.4" ry="4.4"/><ellipse cx="20.5" cy="6.1" rx="3.4" ry="4.4"/><path d="M7.5 17.7 H20"/></g><circle cx="2.8" cy="13.8" r="1.8" fill="#cfcfd1"/><path d="M25.2 17.7 L18 14 V21.5 Z" fill="#cfcfd1"/></svg>
<!-- font -->
<div class="t" style="left:589px;top:29px;font-size:25px;color:#77787c">宋体</div>
<div class="tri d" style="left:665px;top:37px"></div>
<div class="t" style="left:583px;top:72px;font-size:28px;color:#77787c;-webkit-text-stroke:0">B</div>
<svg style="left:659px;top:73px" width="20" height="22"><path d="M5 1 H19 M1 21 H15 M12 1 L8 21" stroke="#77787c" stroke-width="2.2" fill="none"/></svg>
<div class="t" style="left:715px;top:29px;font-size:26px;color:#7b7c80;-webkit-text-stroke:0.6px #7b7c80">10</div>
<div class="tri d" style="left:780px;top:37px"></div>
<svg style="left:811px;top:29px" width="25" height="28"><path d="M5 18 L12.5 0.5 L20 18 M7.5 12 H17.5" stroke="#77787c" stroke-width="2.2" fill="none"/><rect x="0" y="25" width="25" height="3" fill="#1e1f22"/></svg>
<div class="tri d" style="left:852px;top:37px"></div>
<svg style="left:883px;top:29px" width="25" height="28"><path d="M10.5 1.5 L19 10 L10.5 18.5 L2 10 Z" fill="none" stroke="#77787c" stroke-width="2.2" stroke-linejoin="round"/><path d="M4 11 H17 L10.5 18.5 Z" fill="#77787c"/><path d="M21.5 12 Q19 15.5 21.5 17.5 Q24 15.5 21.5 12Z" fill="#77787c"/><rect x="0" y="25" width="25" height="3" fill="#1e1f22"/></svg>
<div class="tri d" style="left:924px;top:37px"></div>
<svg style="left:734px;top:73px" width="22" height="23"><path d="M2 0.5 V10 A8 8 0 0 0 18 10 V0.5" fill="none" stroke="#77787c" stroke-width="2.2"/><path d="M0 21.5 H21" stroke="#77787c" stroke-width="2.2"/></svg>
<svg style="left:809px;top:72px" width="22" height="24"><path d="M17.5 6 Q17 1.2 10.5 1.2 Q4 1.2 4 6 Q4 10.5 10.5 11.5 Q17.5 12.5 17.5 17.5 Q17.5 22.8 10.5 22.8 Q4 22.8 3.7 17.5" fill="none" stroke="#77787c" stroke-width="2.2"/><path d="M0 11.5 H21" stroke="#77787c" stroke-width="2.2"/></svg>
<svg style="left:883px;top:71px" width="25" height="25"><rect x="1.2" y="1.2" width="22.6" height="22.6" rx="4" fill="none" stroke="#77787c" stroke-width="2.2"/><path d="M12.5 1 V24 M1 12.5 H24" stroke="#77787c" stroke-width="2"/></svg>
<div class="tri d" style="left:924px;top:80px"></div>
<!-- align -->
<svg style="left:988px;top:29px" width="22" height="23"><path d="M6.5 2 H21 M0 8.3 H21 M6.5 16 H21 M0 21.5 H21" stroke="#77787c" stroke-width="2.2"/></svg>
<div class="tri d" style="left:1026px;top:37px"></div>
<svg style="left:1064px;top:29px" width="25" height="24"><path d="M0 12 H24" stroke="#77787c" stroke-width="2.2"/><path d="M12 0 V5" stroke="#77787c" stroke-width="2"/><path d="M7.5 4.5 H16.5 L12 9.5 Z" fill="#77787c"/><path d="M12 19 V24" stroke="#77787c" stroke-width="2"/><path d="M7.5 19.5 H16.5 L12 14.5 Z" fill="#77787c"/></svg>
<div class="tri d" style="left:1105px;top:37px"></div>
<svg style="left:1145px;top:29px" width="25" height="24"><path d="M1.2 3 V20.5" stroke="#cfcfd1" stroke-width="2.2"/><path d="M11.5 0 V8 M11.5 16 V24" stroke="#cfcfd1" stroke-width="2.2"/><path d="M6 12 H22 M16.5 6 L22.5 12 L16.5 18" fill="none" stroke="#cfcfd1" stroke-width="2.2"/></svg>
<div class="tri" style="left:1185px;top:37px"></div>
<svg style="left:1225px;top:29px" width="22" height="23"><path d="M0 1.5 H21 M9 8 H21 M9 15 H21 M0 21.5 H21" stroke="#cfcfd1" stroke-width="2.2"/><path d="M0.5 6.5 L6.5 11.5 L0.5 16.5 Z" fill="#cfcfd1"/></svg>
<!-- merge -->
<svg style="left:986px;top:71px" width="24" height="25"><path d="M9 1.2 H1.2 V23.8 H9 M15 1.2 H22.8 V23.8 H15" fill="none" stroke="#cfcfd1" stroke-width="2.4"/><path d="M5.5 6.5 V9 M5.5 16 V18.5 M18.5 6.5 V9 M18.5 16 V18.5" stroke="#cfcfd1" stroke-width="2.2"/><path d="M3 12.5 L9 9 V16 Z M21 12.5 L15 9 V16 Z" fill="#cfcfd1"/></svg>
<div class="t lbl" style="left:1019px;top:74px">合并单元格</div>
<div class="tri" style="left:1134px;top:80px"></div>
<svg style="left:1194px;top:71px" width="25" height="25"><rect x="1.2" y="1.2" width="22.6" height="22.6" rx="4" fill="none" stroke="#cfcfd1" stroke-width="2.2"/><path d="M12.5 1 V24 M1 12.5 H24" stroke="#cfcfd1" stroke-width="2"/><path d="M1.5 1.5 L23.5 23.5" stroke="#cfcfd1" stroke-width="2"/></svg>
<div class="tri" style="left:1234px;top:80px"></div>
<!-- theme star -->
<svg style="left:1326px;top:22px" width="34" height="36"><defs><linearGradient id="sg" x1="0.1" y1="0.2" x2="0.8" y2="0.9"><stop offset="0" stop-color="#ff6a3d"/><stop offset="0.35" stop-color="#e94aa8"/><stop offset="0.6" stop-color="#a552f5"/><stop offset="1" stop-color="#25c3fb"/></linearGradient></defs><path d="M20.11 8.94 L21.90 16.34 L28.87 19.39 L22.39 23.38 L21.65 30.96 L15.85 26.02 L8.41 27.66 L11.31 20.62 L7.46 14.05 L15.05 14.64 Z" fill="none" stroke="url(#sg)" stroke-width="2.3" stroke-linejoin="round"/><path d="M10.5 3.5 L13 7.5 M6.5 8.5 L10.5 10" stroke="#f5a623" stroke-width="1.9" stroke-linecap="round"/><path d="M24.5 26 L27.5 29.5" stroke="#101012" stroke-width="2.2"/></svg>
<div class="tri" style="left:1366px;top:39px"></div>
<div class="t lbl" style="left:1298px;top:77px">单元格主题</div>
<svg style="left:1446px;top:28px" width="29" height="28"><rect x="1.2" y="1.2" width="11" height="11" rx="2" fill="none" stroke="#cfcfd1" stroke-width="2.2"/><circle cx="21.5" cy="6.8" r="5.6" fill="none" stroke="#cfcfd1" stroke-width="2.2"/><circle cx="6.8" cy="21" r="5.6" fill="none" stroke="#cfcfd1" stroke-width="2.2"/><path d="M21.5 15.5 L27.2 19.5 L25.5 26 H17.5 L15.8 19.5 Z" fill="none" stroke="#cfcfd1" stroke-width="2.2" stroke-linejoin="round"/></svg>
<div class="tri" style="left:1484px;top:39px"></div>
<div class="t lbl" style="left:1428px;top:77px">条件格式</div>
<!-- filter etc -->
<svg style="left:1566px;top:30px" width="23" height="22"><path d="M1.2 1.2 H21.8 L14 14 V20.8 H9 V14 Z" fill="none" stroke="#cfcfd1" stroke-width="2" stroke-linejoin="round"/><path d="M8.5 14 H14.5" stroke="#cfcfd1" stroke-width="2"/></svg>
<svg style="left:1608px;top:28px" width="25" height="25"><rect x="1.2" y="1.2" width="22.6" height="22.6" rx="5" fill="none" stroke="#cfcfd1" stroke-width="2.2"/><path d="M9 24 V9 H24" fill="none" stroke="#cfcfd1" stroke-width="2.2"/><path d="M1.5 8 L14 2 M1.5 14.5 L22 3.5 M1.5 21 L9 17" stroke="#cfcfd1" stroke-width="1.8"/></svg>
<div class="tri" style="left:1649px;top:37px"></div>
<svg style="left:1565px;top:71px" width="25" height="25"><rect x="1.2" y="1.2" width="22.6" height="22.6" rx="5" fill="none" stroke="#cfcfd1" stroke-width="2.2"/><path d="M12.5 1 V24" stroke="#cfcfd1" stroke-width="2"/><path d="M4.5 12.5 L7.5 10 V15 Z M20.5 12.5 L17.5 10 V15 Z" fill="#cfcfd1"/></svg>
<svg style="left:1608px;top:72px" width="25" height="24"><path d="M5 0.5 V17" stroke="#cfcfd1" stroke-width="2"/><path d="M0.5 16.5 H9.5 L5 23.5 Z" fill="#cfcfd1"/><path d="M13 1.2 H21.5 L13 9.2 H22" fill="none" stroke="#cfcfd1" stroke-width="2"/><path d="M12 23.5 L17 12.5 L22 23.5 M13.8 19.5 H20.2" fill="none" stroke="#cfcfd1" stroke-width="2"/></svg>
<div class="tri" style="left:1649px;top:80px"></div>
<!-- more -->
<svg style="left:1742px;top:29px" width="6" height="27"><circle cx="2.5" cy="3" r="2.5" fill="#cfcfd1"/><circle cx="2.5" cy="13.5" r="2.5" fill="#cfcfd1"/><circle cx="2.5" cy="24" r="2.5" fill="#cfcfd1"/></svg>
<div class="t lbl" style="left:1723px;top:77px">更多</div>
<!-- dataset -->
<svg style="left:1806px;top:28px" width="30" height="29"><path d="M24 6 Q24 1.2 13 1.2 Q1.2 1.2 1.2 6 V23.5 Q1.2 27.5 10 27.5 M1.2 6 Q1.2 10 13 10 Q18 10 20 9 M1.2 18 Q3 19.5 6 20" fill="none" stroke="#cfcfd1" stroke-width="1.9"/><circle cx="19" cy="19" r="8.2" fill="#303137" stroke="#3277fb" stroke-width="2.2"/><path d="M14.5 19 H23.5 M19 14.5 V23.5" stroke="#3277fb" stroke-width="2.2"/></svg>
<div class="tri" style="left:1844px;top:39px"></div>
<div class="t lbl" style="left:1798px;top:77px">数据集</div>
<div class="a" style="left:1970px;top:34px;width:39px;height:54px;border:1px solid #45464b;border-radius:8px"></div>
<svg style="left:1981px;top:56px" width="18" height="12"><path d="M1 1 L9 9.5 L17 1" fill="none" stroke="#b8b8ba" stroke-width="2.4"/></svg>



<!-- MENUS -->
<div class="a" style="left:1990px;top:380px;width:760px;height:700px;border-radius:200px;background:radial-gradient(closest-side,rgba(28,30,40,0.35),rgba(28,30,40,0))"></div>
<div class="a" style="left:2054px;top:429px;width:389px;height:450px;background:#1b1b1d;border:2px solid #3c3d42;border-radius:16px"></div>
<div class="t mi" style="left:2087px;top:465px">数据展示格式</div>
<svg style="left:2412px;top:470px" width="12" height="16"><path d="M1 1 L10 8 L1 15" fill="none" stroke="#cfcfd1" stroke-width="1.6"/></svg>
<div class="t mi" style="left:2087px;top:531px">对齐方式</div>
<svg style="left:2412px;top:532px" width="12" height="16"><path d="M1 1 L10 8 L1 15" fill="none" stroke="#cfcfd1" stroke-width="1.6"/></svg>
<div class="t mi" style="left:2087px;top:610px">排序</div>
<svg style="left:2412px;top:613px" width="12" height="16"><path d="M1 1 L10 8 L1 15" fill="none" stroke="#cfcfd1" stroke-width="1.6"/></svg>
<div class="t mi" style="left:2087px;top:689px">聚合方式</div>
<svg style="left:2412px;top:692px" width="12" height="16"><path d="M1 1 L10 8 L1 15" fill="none" stroke="#cfcfd1" stroke-width="1.6"/></svg>
<div class="t mi" style="left:2087px;top:754px">高级计算</div>
<svg style="left:2412px;top:757px" width="12" height="16"><path d="M1 1 L10 8 L1 15" fill="none" stroke="#cfcfd1" stroke-width="1.6"/></svg>
<div class="a" style="left:2069px;top:797px;width:358px;height:1.5px;background:#2c2d31"></div>
<div class="t mi" style="left:2087px;top:821px">字段显示内容</div>
<div class="a" style="left:2071px;top:449px;width:164px;height:56px;border:4px solid #fe5448"></div>
<!-- submenu -->
<div class="a" style="left:2440px;top:444px;width:227px;height:550px;background:#1b1b1d;border:2px solid #3c3d42;border-radius:16px"></div>
<div class="a" style="left:2455px;top:655px;width:196px;height:64px;background:#2b2b2d;border-radius:8px"></div>
<div class="t mi" style="left:2475px;top:481px">自动</div>
<div class="t mi" style="left:2475px;top:546px">整数</div>
<div class="t mi" style="left:2475px;top:611px">保留1位小数</div>
<div class="t mi" style="left:2475px;top:676px;color:#b4b4b6">保留2位小数</div>
<div class="t mi" style="left:2475px;top:741px">百分比</div>
<div class="t mi" style="left:2475px;top:806px">百分比1位小数</div>
<div class="t mi" style="left:2475px;top:870px">百分比2位小数</div>
<div class="t mi" style="left:2475px;top:935px">自定义</div>
<div class="a" style="left:2455px;top:655px;width:170px;height:68px;border:4px solid #fe5448"></div>
<svg style="left:0;top:0" width="2776" height="1230"><path d="M690 616 L2445 670" stroke="#fe5448" stroke-width="4.5" stroke-linecap="round"/><path d="M675 615.2 L699.2 603.2 L692.2 615.9 L698.5 627.7 Z" fill="#fe5448"/></svg>
</body>
</html>
